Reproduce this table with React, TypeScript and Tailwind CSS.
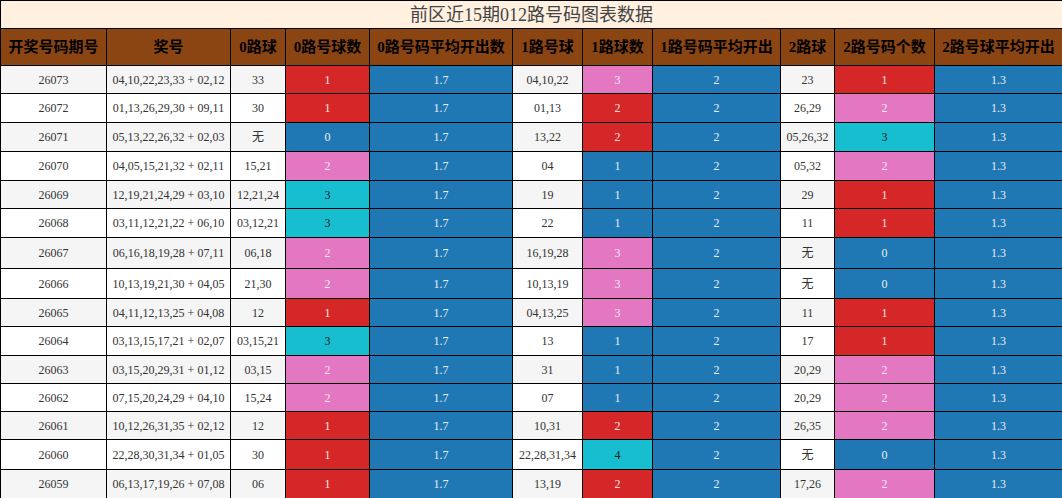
type Tone = "blue" | "red" | "pink" | "cyan"

const toneClass: Record<Tone, string> = {
  blue: "bg-[#1f77b4] text-[#e8eef5]",
  red: "bg-[#d62728] text-[#f3e3e3]",
  pink: "bg-[#e377c2] text-[#f7e6f1]",
  cyan: "bg-[#17becf] text-[#1a1a1a]",
}

// 0路 / 2路 share a scale, 1路 is shifted by one
const scaleA: Record<string, Tone> = { "0": "blue", "1": "red", "2": "pink", "3": "cyan" }
const scaleB: Record<string, Tone> = { "1": "blue", "2": "red", "3": "pink", "4": "cyan" }

const rows = [
  ["26073", "04,10,22,23,33 + 02,12", "33", "1", "04,10,22", "3", "23", "1"],
  ["26072", "01,13,26,29,30 + 09,11", "30", "1", "01,13", "2", "26,29", "2"],
  ["26071", "05,13,22,26,32 + 02,03", "无", "0", "13,22", "2", "05,26,32", "3"],
  ["26070", "04,05,15,21,32 + 02,11", "15,21", "2", "04", "1", "05,32", "2"],
  ["26069", "12,19,21,24,29 + 03,10", "12,21,24", "3", "19", "1", "29", "1"],
  ["26068", "03,11,12,21,22 + 06,10", "03,12,21", "3", "22", "1", "11", "1"],
  ["26067", "06,16,18,19,28 + 07,11", "06,18", "2", "16,19,28", "3", "无", "0"],
  ["26066", "10,13,19,21,30 + 04,05", "21,30", "2", "10,13,19", "3", "无", "0"],
  ["26065", "04,11,12,13,25 + 04,08", "12", "1", "04,13,25", "3", "11", "1"],
  ["26064", "03,13,15,17,21 + 02,07", "03,15,21", "3", "13", "1", "17", "1"],
  ["26063", "03,15,20,29,31 + 01,12", "03,15", "2", "31", "1", "20,29", "2"],
  ["26062", "07,15,20,24,29 + 04,10", "15,24", "2", "07", "1", "20,29", "2"],
  ["26061", "10,12,26,31,35 + 02,12", "12", "1", "10,31", "2", "26,35", "2"],
  ["26060", "22,28,30,31,34 + 01,05", "30", "1", "22,28,31,34", "4", "无", "0"],
  ["26059", "06,13,17,19,26 + 07,08", "06", "1", "13,19", "2", "17,26", "2"],
]

// row heights read off the reference (rows holding 无 sit a little taller)
const rowH = [
  "h-[28px]", "h-[29px]", "h-[29px]", "h-[29px]", "h-[28px]",
  "h-[29px]", "h-[31px]", "h-[30px]", "h-[28px]", "h-[29px]",
  "h-[28px]", "h-[28px]", "h-[28px]", "h-[30px]", "h-[29px]",
]

const headers = [
  { label: "开奖号码期号", w: "w-[106px]" },
  { label: "奖号", w: "w-[124px]" },
  { label: "0路球", w: "w-[55px]" },
  { label: "0路号球数", w: "w-[84px]" },
  { label: "0路号码平均开出数", w: "w-[143px]" },
  { label: "1路号球", w: "w-[70px]" },
  { label: "1路球数", w: "w-[70px]" },
  { label: "1路号码平均开出", w: "w-[128px]" },
  { label: "2路球", w: "w-[54px]" },
  { label: "2路号码个数", w: "w-[100px]" },
  { label: "2路号球平均开出", w: "w-[128px]" },
]

function Plain({ children, bg }: { children: string; bg: string }) {
  return <td className={`border border-black ${bg} text-[#333]`}>{children}</td>
}

function Colored({ value, tone }: { value: string; tone: Tone }) {
  return <td className={`border border-black ${toneClass[tone]}`}>{value}</td>
}

export default function App() {
  return (
    <div className="w-[1062px] bg-white font-['Liberation_Serif','Noto_Sans_CJK_SC',serif]">
      <table className="w-[1062px] table-fixed border-collapse text-center text-[12px]">
        <colgroup>
          {headers.map((h) => (
            <col key={h.label} className={h.w} />
          ))}
        </colgroup>
        <thead>
          <tr className="h-[28px]">
            <th
              colSpan={11}
              className="border border-black bg-[#fff0e0] text-[18px] font-normal leading-none text-[#444]"
            >
              前区近15期012路号码图表数据
            </th>
          </tr>
          <tr className="h-[37px]">
            {headers.map((h) => (
              <th
                key={h.label}
                className="border border-black bg-[#8b4513] px-0 text-[15px] font-bold whitespace-nowrap text-black"
              >
                {h.label}
              </th>
            ))}
          </tr>
        </thead>
        <tbody>
          {rows.map((r, i) => {
            const bg = i % 2 === 0 ? "bg-[#f5f5f5]" : "bg-white"
            return (
              <tr key={r[0]} className={rowH[i]}>
                <Plain bg={bg}>{r[0]}</Plain>
                <Plain bg={bg}>{r[1]}</Plain>
                <Plain bg={bg}>{r[2]}</Plain>
                <Colored value={r[3]} tone={scaleA[r[3]]} />
                <Colored value="1.7" tone="blue" />
                <Plain bg={bg}>{r[4]}</Plain>
                <Colored value={r[5]} tone={scaleB[r[5]]} />
                <Colored value="2" tone="blue" />
                <Plain bg={bg}>{r[6]}</Plain>
                <Colored value={r[7]} tone={scaleA[r[7]]} />
                <Colored value="1.3" tone="blue" />
              </tr>
            )
          })}
        </tbody>
      </table>
    </div>
  )
}
